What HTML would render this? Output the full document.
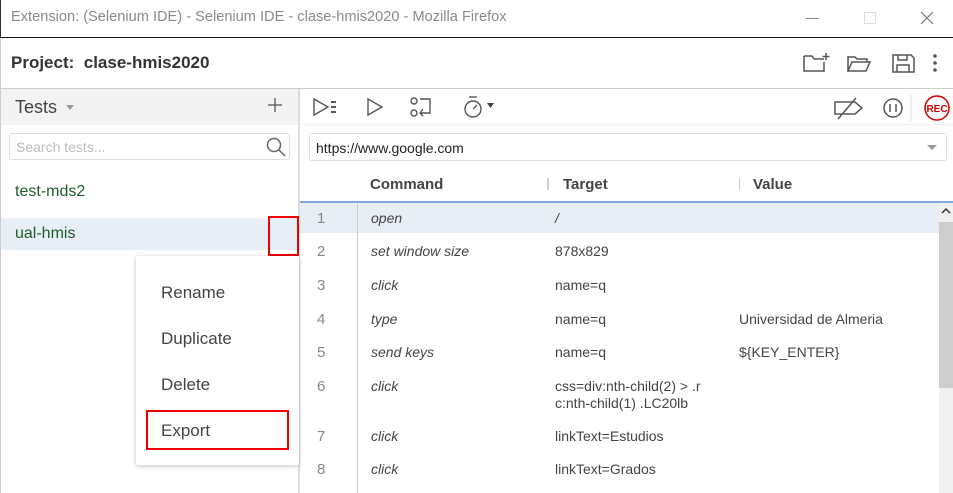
<!DOCTYPE html>
<html><head><meta charset="utf-8"><style>
*{box-sizing:border-box;margin:0;padding:0}
body{width:953px;height:493px;overflow:hidden;background:#fff;font-family:"Liberation Sans",Arial,sans-serif;position:relative;color:#333}
.a{position:absolute}
.t{position:absolute;white-space:nowrap}
</style></head><body>
<!-- title bar -->
<div class="a" style="left:0;top:0;width:953px;height:37px;background:#fff;border-left:1px solid #333"></div>
<div class="t" style="left:11px;top:9px;font-size:14.6px;color:#8a8a8a">Extension: (Selenium IDE) - Selenium IDE - clase-hmis2020 - Mozilla Firefox</div>
<div class="a" style="left:806px;top:18px;width:13px;height:1px;background:#888"></div>
<div class="a" style="left:864px;top:12px;width:12px;height:12px;border:1px solid #ddd"></div>
<svg class="a" style="left:920px;top:11px" width="14" height="14"><path d="M1 1L13 13M13 1L1 13" stroke="#777" stroke-width="1.2"/></svg>
<div class="a" style="left:0;top:37px;width:953px;height:1px;background:#111"></div>
<!-- header -->
<div class="a" style="left:0;top:38px;width:1px;height:455px;background:#ccc"></div>
<div class="t" style="left:11px;top:53px;font-size:17px;font-weight:bold;color:#333">Project:&nbsp; clase-hmis2020</div>
<svg class="a" style="left:800px;top:50px" width="145" height="26" fill="none" stroke="#555" stroke-width="1.5">
<path d="M4 6h8l2 3h10M4 6v15h20v-9M26 3v7M22.5 6.5h7"/>
<path d="M48 21V7h7l2 2h10v3M48 21l4-9h18l-4 9z"/>
<path d="M93 5h18l3 3v14H93zM98 5v5h9V5M97 22v-7h12v7"/>
<circle cx="135" cy="6" r="1.8" fill="#555" stroke="none"/><circle cx="135" cy="13" r="1.8" fill="#555" stroke="none"/><circle cx="135" cy="20" r="1.8" fill="#555" stroke="none"/>
</svg>
<div class="a" style="left:0;top:88px;width:953px;height:1px;background:#ccc"></div>
<!-- left panel -->
<div class="a" style="left:1px;top:89px;width:297px;height:36px;background:#f3f3f3"></div>
<div class="t" style="left:15px;top:97px;font-size:18px;color:#444">Tests</div>
<div class="a" style="left:66px;top:105px;border-left:4px solid transparent;border-right:4px solid transparent;border-top:5px solid #999"></div>
<svg class="a" style="left:267px;top:97px" width="16" height="16"><path d="M8 1v14M1 8h14" stroke="#555" stroke-width="1.3"/></svg>
<div class="a" style="left:298px;top:89px;width:2px;height:404px;background:#ddd"></div>
<div class="a" style="left:9px;top:133px;width:281px;height:27px;border:1px solid #ddd;border-radius:3px"></div>
<div class="t" style="left:16px;top:139px;font-size:14px;color:#bbb">Search tests...</div>
<svg class="a" style="left:266px;top:137px" width="20" height="20" fill="none" stroke="#666" stroke-width="1.5"><circle cx="8" cy="8" r="6.5"/><path d="M13 13l6 6"/></svg>
<div class="t" style="left:15px;top:183px;font-size:16px;color:#1f5c2e">test-mds2</div>
<div class="a" style="left:1px;top:218px;width:297px;height:32px;background:#e8eef5"></div>
<div class="t" style="left:15px;top:225px;font-size:16px;color:#1f5c2e">ual-hmis</div>
<div class="a" style="left:268px;top:216px;width:31px;height:40px;border:2px solid #e00"></div>
<!-- right toolbar -->
<svg class="a" style="left:310px;top:94px" width="190" height="26" fill="none" stroke="#555" stroke-width="1.4">
<path d="M4 5l14 8-14 8z"/><path d="M21 8h5M21 13h5M21 18h5" stroke-width="2"/>
<path d="M58 5l14 8-14 8z"/>
<circle cx="104" cy="7" r="3"/><circle cx="104" cy="19" r="3"/><path d="M110 5h10v14h-10M113 15l-3 4 3 3"/>
<path d="M159 3h8"/><circle cx="163" cy="15" r="8"/><path d="M163 15l4-4"/>
<path d="M177 9h7l-3.5 5z" fill="#444" stroke="none"/>
</svg>
<svg class="a" style="left:830px;top:93px" width="123" height="30" fill="none" stroke="#555" stroke-width="1.5">
<path d="M5 9h20l7 6-7 6H5z"/><path d="M8 26L26 5"/>
<circle cx="63" cy="15" r="9"/><path d="M60 11v8M66 11v8"/>
<path d="M81 2v26" stroke="#ddd" stroke-width="1"/>
<circle cx="107" cy="15" r="12" stroke="#c00"/>
<text x="107" y="19" font-size="10" font-weight="bold" fill="#c00" stroke="none" text-anchor="middle" font-family="Liberation Sans">REC</text>
</svg>
<div class="a" style="left:300px;top:124px;width:653px;height:1px;background:#eee"></div>
<div class="a" style="left:309px;top:133px;width:638px;height:28px;border:1px solid #ddd;border-radius:3px"></div>
<div class="t" style="left:316px;top:140px;font-size:14px;color:#222">https://www.google.com</div>
<div class="a" style="left:927px;top:145px;border-left:5px solid transparent;border-right:5px solid transparent;border-top:5px solid #999"></div>
<!-- table header -->
<div class="t" style="left:370px;top:176px;font-size:15px;font-weight:bold;color:#444">Command</div>
<div class="a" style="left:547px;top:178px;width:2px;height:12px;background:#ccc"></div>
<div class="t" style="left:563px;top:176px;font-size:15px;font-weight:bold;color:#444">Target</div>
<div class="a" style="left:739px;top:178px;width:1px;height:12px;background:#ccc"></div>
<div class="t" style="left:753px;top:176px;font-size:15px;font-weight:bold;color:#444">Value</div>
<div class="a" style="left:300px;top:201px;width:653px;height:2px;background:#7ea7e0"></div>
<div class="a" style="left:300px;top:203px;width:639px;height:30px;background:#e8eef5"></div>
<div class="a" style="left:357px;top:203px;width:1px;height:290px;background:#ccc"></div>
<!-- scrollbar -->
<div class="a" style="left:939px;top:203px;width:14px;height:290px;background:#f0f0f0"></div>
<div class="a" style="left:939px;top:222px;width:14px;height:166px;background:#cdcdcd"></div>
<svg class="a" style="left:940px;top:206px" width="12" height="10"><path d="M2 7l4-4 4 4" fill="none" stroke="#333" stroke-width="1.5"/></svg>
<div style="font-size:14px;color:#444">
<div class="t" style="left:317px;top:210px;color:#888;font-size:15px">1</div><div class="t" style="left:371px;top:210px;font-style:italic">open</div><div class="t" style="left:555px;top:210px;font-style:italic">/</div>
<div class="t" style="left:317px;top:243px;color:#888;font-size:15px">2</div><div class="t" style="left:371px;top:243px;font-style:italic">set window size</div><div class="t" style="left:555px;top:243px">878x829</div>
<div class="t" style="left:317px;top:277px;color:#888;font-size:15px">3</div><div class="t" style="left:371px;top:277px;font-style:italic">click</div><div class="t" style="left:555px;top:277px">name=q</div>
<div class="t" style="left:317px;top:311px;color:#888;font-size:15px">4</div><div class="t" style="left:371px;top:311px;font-style:italic">type</div><div class="t" style="left:555px;top:311px">name=q</div><div class="t" style="left:739px;top:311px">Universidad de Almeria</div>
<div class="t" style="left:317px;top:344px;color:#888;font-size:15px">5</div><div class="t" style="left:371px;top:344px;font-style:italic">send keys</div><div class="t" style="left:555px;top:344px">name=q</div><div class="t" style="left:739px;top:344px">${KEY_ENTER}</div>
<div class="t" style="left:317px;top:378px;color:#888;font-size:15px">6</div><div class="t" style="left:371px;top:378px;font-style:italic">click</div><div class="t" style="left:555px;top:378px;line-height:17px">css=div:nth-child(2) &gt; .r<br>c:nth-child(1) .LC20lb</div>
<div class="t" style="left:317px;top:428px;color:#888;font-size:15px">7</div><div class="t" style="left:371px;top:428px;font-style:italic">click</div><div class="t" style="left:555px;top:428px">linkText=Estudios</div>
<div class="t" style="left:317px;top:461px;color:#888;font-size:15px">8</div><div class="t" style="left:371px;top:461px;font-style:italic">click</div><div class="t" style="left:555px;top:461px">linkText=Grados</div>
</div>
<!-- context menu -->
<div class="a" style="left:136px;top:256px;width:163px;height:209px;background:#fff;box-shadow:0 1px 5px rgba(0,0,0,.25);border-radius:2px"></div>
<div class="t" style="left:161px;top:283px;font-size:17px;color:#444">Rename</div>
<div class="t" style="left:161px;top:329px;font-size:17px;color:#444">Duplicate</div>
<div class="t" style="left:161px;top:375px;font-size:17px;color:#444">Delete</div>
<div class="t" style="left:161px;top:421px;font-size:17px;color:#444">Export</div>
<div class="a" style="left:146px;top:410px;width:143px;height:40px;border:2px solid #e00"></div>
</body></html>
